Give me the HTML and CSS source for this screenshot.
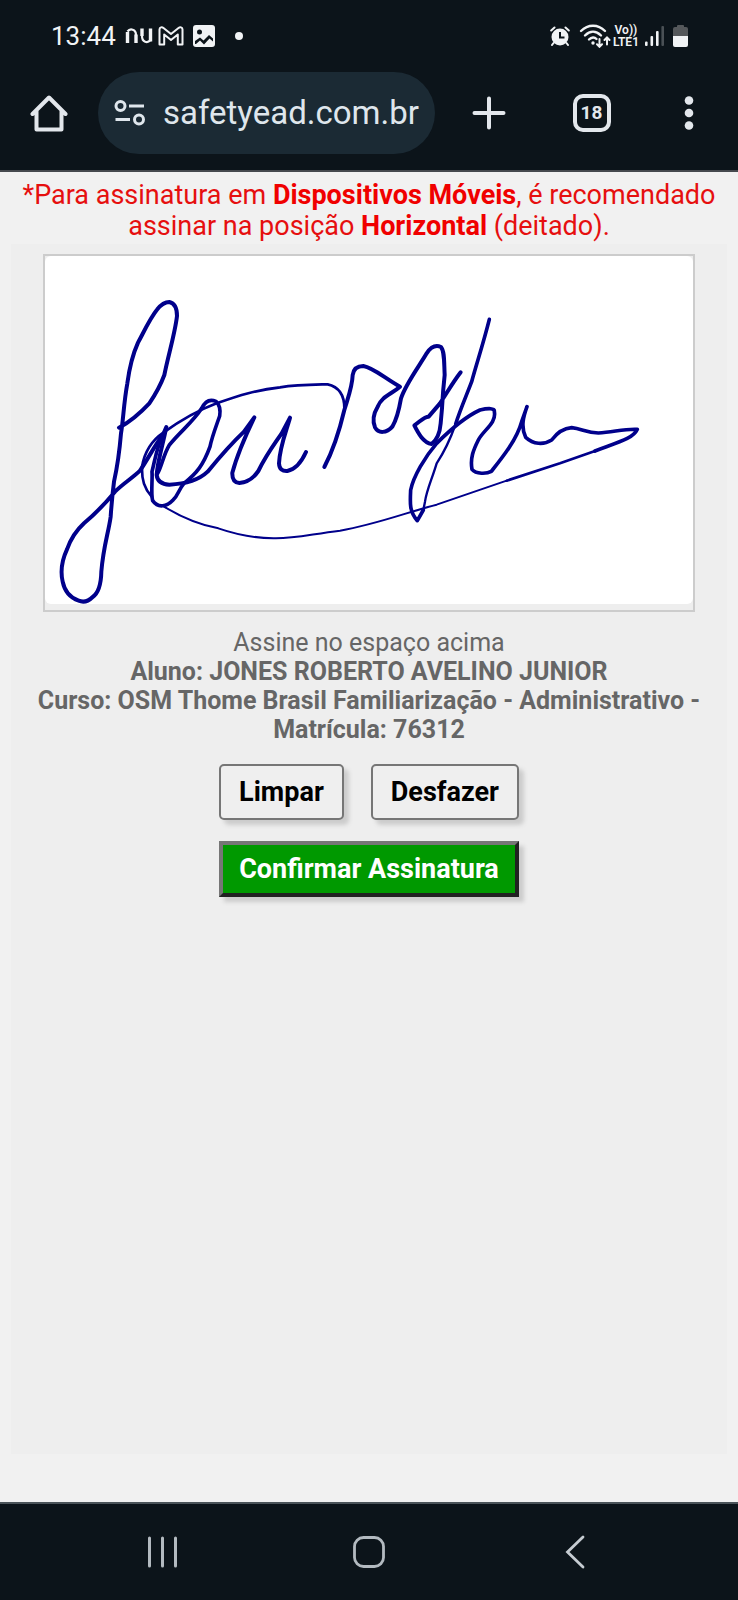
FILE: index.html
```html
<!DOCTYPE html>
<html lang="pt-BR">
<head>
<meta charset="utf-8">
<meta name="viewport" content="width=device-width, initial-scale=1">
<title>Assinatura</title>
<link rel="stylesheet" href="styles.css">
</head>
<body>
<header class="chrome">
  <div class="status">
    <div class="status-left">
      <span class="clock">13:44</span>
      <svg class="nu" width="28" height="18" viewBox="0 0 28 18" fill="none" stroke="#f1f3f5" aria-label="Nubank"><path stroke-width="3.400" d="M2.500 5V16M11 16V7.500M17 1.500V9M25.500 1.500V14.500"/><path stroke-width="2.200" d="M2.500 4.500C5 1 11 2 11 8M17 9C17 15.500 22.500 16.500 25.500 13"/></svg>
      <svg class="gmail" width="26" height="20" viewBox="0 0 26 20" fill="none" stroke="#f1f3f5" stroke-width="2" stroke-linejoin="round" aria-label="Gmail"><path d="M1.500 18.500V3.500C1.500 1 4 .800 5.500 2L13 8 20.500 2C22 .800 24.500 1 24.500 3.500V18.500H19.800V8.500L13 14 6.200 8.500V18.500Z"/></svg>
      <svg class="photo" width="22" height="22" viewBox="0 0 22 22" aria-hidden="true"><rect width="22" height="22" rx="3" fill="#f1f3f5"/><circle cx="6.500" cy="7" r="2.500" fill="#0c141a"/><path fill="#0c141a" d="M2 19V16L7 12.500 10.500 15.500 16 10 20 13.500V16.500L16.500 13.500 11 19.500 7 15.500 3 19Z"/></svg>
      <span class="dot"></span>
    </div>
    <div class="status-right">
      <svg width="20" height="20" viewBox="0 0 20 20" fill="none" aria-hidden="true"><circle cx="10" cy="11" r="8.500" fill="#f1f3f5"/><path d="M1.200 4.500L4.500 1.500M18.800 4.500L15.500 1.500M3.500 17L2 19M16.500 17L18 19" stroke="#f1f3f5" stroke-width="2" stroke-linecap="round"/><path d="M10 6V11.500H14.500" stroke="#0c141a" stroke-width="2"/></svg>
      <svg class="wifi" width="32" height="24" viewBox="0 0 32 24" fill="none" stroke="#f1f3f5" stroke-width="2.400" stroke-linecap="round" aria-hidden="true"><path d="M2 7C9 0 19 0 26 7M6 11.500C11 6.500 17 6.500 22 11.500M10 15.500C12.500 13 15.500 13 17.500 15"/><circle cx="14" cy="19" r="1.700" fill="#f1f3f5" stroke="none"/><path stroke-width="2" d="M20.500 15V22.500M18 20.300L20.500 22.800 23 20.300M28 20.500V13.500M25.500 16L28 13.500 30.500 16"/></svg>
      <span class="volte"><span>Vo))</span><span>LTE1</span></span>
      <svg class="signal" width="19" height="20" viewBox="0 0 19 20" fill="#f1f3f5" aria-hidden="true"><rect y="15.500" width="2.600" height="4.500" rx="1"/><rect x="5.500" y="10" width="2.600" height="10" rx="1"/><rect x="11" y="5" width="2.600" height="15" rx="1"/><rect x="16.400" width="2.600" height="20" rx="1" fill="#4a5055"/></svg>
      <svg width="15" height="22" viewBox="0 0 15 22" aria-hidden="true"><path fill="#55585b" d="M4 1Q4 0 5 0H10Q11 0 11 1V2H13Q15 2 15 4V11H0V4Q0 2 2 2H4Z"/><path fill="#f1f3f5" d="M0 11H15V20Q15 22 13 22H2Q0 22 0 20Z"/></svg>
    </div>
  </div>
  <div class="toolbar">
    <button class="tool home" type="button" aria-label="Início"><svg width="38" height="38" viewBox="0 0 38 38" fill="none" stroke="#e3e7ec" stroke-width="4" stroke-linejoin="round" stroke-linecap="round"><path d="M2.500 20L19 3.500 35.500 20M6.500 17V35.500H31.500V17"/></svg></button>
    <button class="address" type="button"><svg width="32" height="26" viewBox="0 0 32 26" fill="none" stroke="#dfe6ec" stroke-width="3" aria-hidden="true"><circle cx="6.500" cy="6" r="4.500"/><circle cx="25" cy="19.500" r="4.500"/><path d="M15 6H30M1.500 19.500H16"/></svg><span>safetyead.com.br</span></button>
    <button class="tool plus" type="button" aria-label="Nova guia"><svg width="34" height="34" viewBox="0 0 34 34" stroke="#e3e7ec" stroke-width="4" stroke-linecap="round"><path d="M17 2.500V31.500M2.500 17H31.500"/></svg></button>
    <button class="tool tabs" type="button" aria-label="18 guias abertas"><span>18</span></button>
    <button class="tool menu" type="button" aria-label="Menu"><svg width="10" height="34" viewBox="0 0 10 34" fill="#e3e7ec"><circle cx="5" cy="4.500" r="4.300"/><circle cx="5" cy="17" r="4.300"/><circle cx="5" cy="29.500" r="4.300"/></svg></button>
  </div>
</header>

<main class="page">
  <p class="notice">*Para assinatura em <b>Dispositivos Móveis</b>, é recomendado assinar na posição <b>Horizontal</b> (deitado).</p>
  <section class="panel">
    <div class="pad">
      <svg class="signature" viewBox="15 -72 1944 1044" role="img" aria-label="Assinatura">
        <g fill="none" stroke="#00008b" stroke-linecap="round" stroke-linejoin="round">
          <path stroke-width="12" d="M237 443C265 428 300 400 328 370C345 345 360 320 373 285C385 225 405 160 411 108C411 88 406 70 388 66C374 66 362 75 352 88C330 115 312 155 294 188C275 230 268 265 262 310C251 370 250 420 243 460C238 520 232 560 222 605C216 650 214 680 212 710C205 760 190 800 184 875C183 920 174 940 158 951C146 963 130 968 116 962C95 955 75 940 68 905C60 870 66 840 81 808C93 775 110 750 132 730C170 698 200 665 225 635C250 610 280 592 300 572C325 535 345 495 370 462L379 441C370 490 353 540 350 585C352 604 366 613 388 614C440 612 480 597 503 575C540 530 575 490 612 455L643 412C615 470 590 530 577 578C576 600 584 608 598 609C625 607 640 595 655 573C680 522 705 490 725 460L750 413C740 450 719 500 717 550C718 568 727 574 742 573C765 568 785 545 798 516"/>
          <path stroke-width="11" d="M353 580C365 560 370 525 388 495C425 450 460 425 485 385C497 360 512 357 528 364C540 375 541 395 539 408C528 440 516 470 510 500C490 555 470 580 432 610C415 630 415 645 400 659C380 680 355 686 338 662C332 640 338 600 336 575C345 540 350 500 370 462"/>
          <path stroke-width="6" d="M372 680C425 712 480 735 535 745C590 764 640 774 700 775C760 777 810 763 900 752C1010 733 1100 697 1190 674L1400 602"/>
          <path stroke-width="8" d="M1400 602L1560 550 1665 513M335 650C313 625 305 600 306 560C313 520 330 485 370 458C440 408 490 385 530 370C600 345 650 330 720 322C770 314 820 314 863 313C895 320 914 345 913 388"/>
          <path stroke-width="12" d="M853 561C880 510 900 445 913 390C925 350 937 320 938 285C941 265 952 258 970 258C1000 263 1035 295 1080 320C1052 344 1025 350 1013 380C998 405 998 425 1005 442C1015 461 1040 460 1057 440C1070 418 1077 390 1083 355C1098 310 1140 255 1160 220C1173 200 1188 194 1203 201C1214 215 1212 245 1214 285C1209 330 1208 350 1206 385L1202 430C1200 455 1190 480 1175 492C1150 488 1135 460 1123 436C1140 425 1152 410 1166 410L1200 370C1220 340 1240 305 1262 277"/>
          <path stroke-width="11" d="M1348 118C1330 190 1310 250 1295 305C1280 345 1262 385 1247 432"/>
          <path stroke-width="7" d="M1247 432C1230 480 1210 520 1190 550C1175 600 1160 630 1155 665L1150 690"/>
          <path stroke-width="11" d="M1150 690L1132 722C1108 695 1110 670 1112 630C1120 590 1155 530 1190 490C1230 450 1270 413 1320 390C1345 384 1365 384 1363 395C1370 430 1330 450 1315 480C1300 510 1290 535 1296 568C1308 583 1340 582 1354 574C1385 535 1430 480 1445 425L1461 380C1450 410 1442 440 1457 472C1480 493 1510 496 1535 480C1550 460 1570 445 1595 443C1625 446 1640 458 1675 459C1720 457 1750 446 1792 448C1780 475 1740 485 1665 513"/>
        </g>
      </svg>
    </div>
    <div class="details">
      <p>Assine no espaço acima</p>
      <p><b>Aluno: JONES ROBERTO AVELINO JUNIOR</b></p>
      <p><b>Curso: OSM Thome Brasil Familiarização - Administrativo - Matrícula: 76312</b></p>
    </div>
    <div class="actions">
      <button class="btn" type="button">Limpar</button>
      <button class="btn" type="button">Desfazer</button>
      <button class="btn confirm" type="button">Confirmar Assinatura</button>
    </div>
  </section>
</main>

<nav class="system" aria-label="Navegação do sistema">
  <button type="button" aria-label="Recentes"><svg width="32" height="32" viewBox="0 0 32 32" stroke="#b3bac0" stroke-width="3" stroke-linecap="round"><path d="M2.500 2V30M15.500 2V30M28.500 2V30"/></svg></button>
  <button type="button" aria-label="Tela inicial"><svg width="32" height="32" viewBox="0 0 32 32" fill="none" stroke="#b3bac0" stroke-width="2.800"><rect x="1.500" y="1.500" width="29" height="29" rx="9"/></svg></button>
  <button type="button" aria-label="Voltar"><svg width="20" height="34" viewBox="0 0 20 34" fill="none" stroke="#c6ccd2" stroke-width="2.800" stroke-linecap="round"><path d="M18 2L2.500 17 18 32"/></svg></button>
</nav>
</body>
</html>
```
FILE: styles.css
```css
* { box-sizing: border-box; }

body {
  margin: 0;
  min-height: 100vh;
  display: flex;
  flex-direction: column;
  background: #f1f1f1;
  font-family: Roboto, "Liberation Sans", sans-serif;
}

p { margin: 0; }

button {
  font-family: inherit;
  cursor: pointer;
}

svg { display: block; flex: none; }

.chrome {
  background: #0c141a;
  border-bottom: 2px solid #45494e;
  padding-bottom: 16px;
}

.status {
  display: flex;
  justify-content: space-between;
  height: 72px;
  padding: 0 50px 0 51px;
  color: #f1f3f5;
}

.status-left,
.status-right { display: flex; align-items: center; }

.clock { font-size: 26px; line-height: 32px; }
.nu { margin-left: 9px; }
.gmail { margin-left: 5px; }
.photo { margin-left: 9px; }

.dot {
  width: 8px;
  height: 8px;
  margin-left: 20px;
  border-radius: 50%;
  background: #f1f3f5;
}

.wifi { margin-left: 9px; }

.volte {
  display: flex;
  flex-direction: column;
  align-items: center;
  margin: 0 6px 0 2px;
  font-size: 12px;
  font-weight: 600;
  line-height: 12px;
}

.signal { margin-right: 9px; }

.toolbar { display: flex; height: 82px; }

.tool {
  display: flex;
  align-items: center;
  justify-content: center;
  padding: 0;
  border: 0;
  background: none;
  color: #e3e7ec;
}

.home { width: 98px; }
.plus { width: 108px; }
.tabs { width: 97px; }
.menu { width: 98px; }

.tabs span {
  width: 38px;
  height: 38px;
  border: 4px solid #e3e7ec;
  border-radius: 10px;
  font-size: 19px;
  font-weight: 700;
  line-height: 30px;
}

.address {
  flex: 1;
  display: flex;
  align-items: center;
  gap: 17px;
  min-width: 0;
  padding: 0 16px;
  border: 0;
  border-radius: 41px;
  background: #1b2a34;
  color: #dfe6ec;
  font-size: 33px;
  line-height: 40px;
  white-space: nowrap;
}

.page {
  flex: 1;
  display: flex;
  flex-direction: column;
  padding: 8px 11px 48px;
}

.notice {
  padding-bottom: 2px;
  color: #e60f0f;
  font-size: 27px;
  line-height: 31px;
  text-align: center;
}

.notice b { color: #f00000; }

.panel {
  flex: 1;
  padding: 10px 16px;
  background: #eee;
}

.pad {
  margin: 0 16px;
  padding-bottom: 6px;
  border: 2px solid #ccc;
}

.signature {
  width: 100%;
  height: auto;
  border-radius: 6px;
  background: #fff;
}

.details {
  margin-top: 16px;
  color: #666;
  font-size: 25px;
  line-height: 29px;
  text-align: center;
}

.actions {
  display: grid;
  grid-template-columns: auto auto;
  justify-content: center;
  gap: 21px 27px;
  margin-top: 20px;
}

.btn {
  height: 56px;
  padding: 0 18px;
  border: 2px solid #767676;
  border-radius: 5px;
  background: #efefef;
  box-shadow: 5px 5px 4px #ccc;
  color: #000;
  font-size: 27px;
  font-weight: 700;
}

.confirm {
  grid-column: 1 / -1;
  padding: 0 16px;
  border: 4px solid;
  border-color: #767676 #212121 #212121 #767676;
  border-radius: 0;
  background: #090;
  color: #fff;
}

.system {
  display: flex;
  height: 98px;
  padding: 0 60px;
  border-top: 2px solid #4a5359;
  background: #0c141a;
}

.system button {
  flex: 1;
  display: flex;
  align-items: center;
  justify-content: center;
  border: 0;
  background: none;
}
```
